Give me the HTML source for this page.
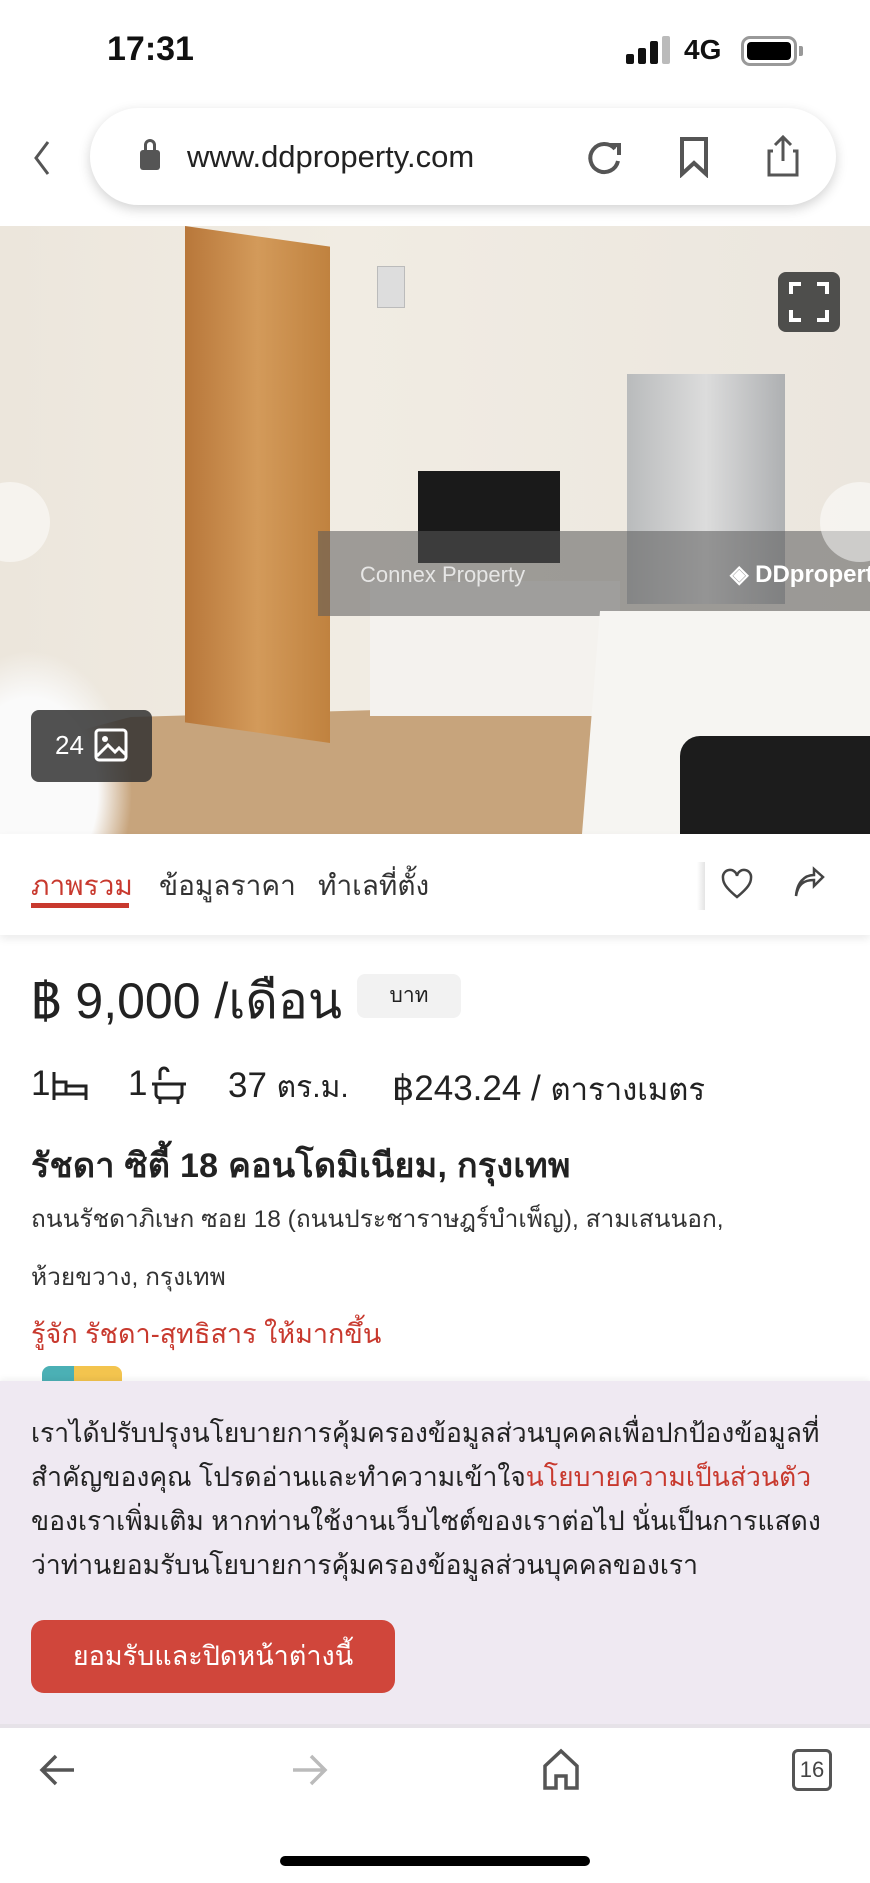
<!DOCTYPE html>
<html><head><meta charset="utf-8"><style>
*{margin:0;padding:0;box-sizing:border-box}
body{width:870px;height:1883px;background:#fff;font-family:"Liberation Sans","Noto Sans CJK SC",sans-serif;position:relative;overflow:hidden;color:#222}
.a{position:absolute}
.th{font-family:"Liberation Sans","Noto Sans CJK SC","WenQuanYi Zen Hei",sans-serif}
</style></head><body>
<!-- status bar -->
<div class="a" style="left:107px;top:30px;font-size:34px;font-weight:bold;color:#111">17:31</div>
<div class="a" style="left:626px;top:54px;width:8px;height:10px;background:#111;border-radius:2px"></div>
<div class="a" style="left:638px;top:48px;width:8px;height:16px;background:#111;border-radius:2px"></div>
<div class="a" style="left:650px;top:41px;width:8px;height:23px;background:#111;border-radius:2px"></div>
<div class="a" style="left:662px;top:36px;width:8px;height:28px;background:#bbb;border-radius:2px"></div>
<div class="a" style="left:684px;top:34px;font-size:28px;font-weight:bold;color:#111">4G</div>
<div class="a" style="left:741px;top:36px;width:56px;height:30px;border:3px solid #999;border-radius:9px;padding:3px"><div style="width:100%;height:100%;background:#000;border-radius:4px"></div></div>
<div class="a" style="left:799px;top:46px;width:4px;height:10px;background:#999;border-radius:0 2px 2px 0"></div>
<!-- url bar -->
<svg class="a" style="left:28px;top:138px" width="30" height="40"><path d="M20 4 L8 20 L20 36" stroke="#555" stroke-width="3" fill="none"/></svg>
<div class="a" style="left:90px;top:108px;width:746px;height:97px;background:#fff;border-radius:49px;box-shadow:0 4px 12px rgba(0,0,0,.18)"></div>
<div class="a" style="left:140px;top:150px;width:20px;height:20px;background:#555;border-radius:3px"></div>
<div class="a" style="left:144px;top:139px;width:12px;height:16px;border:3px solid #555;border-radius:6px 6px 0 0"></div>
<div class="a" style="left:187px;top:139px;font-size:31px;color:#222">www.ddproperty.com</div>
<svg class="a" style="left:585px;top:137px" width="42" height="42"><path d="M30 12 A14 14 0 1 0 33 24" stroke="#555" stroke-width="4" fill="none"/><path d="M24 8 L34 8 L34 18" stroke="#555" stroke-width="4" fill="none"/></svg>
<svg class="a" style="left:678px;top:136px" width="34" height="42"><path d="M4 3 H28 V38 L16 27 L4 38 Z" stroke="#555" stroke-width="4" fill="none"/></svg>
<svg class="a" style="left:765px;top:133px" width="36" height="46"><path d="M8 18 H4 V42 H32 V18 H28" stroke="#555" stroke-width="3" fill="none"/><path d="M18 4 V28 M10 12 L18 4 L26 12" stroke="#555" stroke-width="3" fill="none"/></svg>
<!-- photo -->
<div class="a" style="left:0;top:226px;width:870px;height:608px;overflow:hidden;background:linear-gradient(90deg,#ece6dc 0%,#f1ece3 40%,#ebe6de 100%)">
  <div class="a" style="left:0;top:470px;width:870px;height:140px;background:#c7a47c;clip-path:polygon(15% 15%,100% 0,100% 100%,0 100%,0 40%)"></div>
  <div class="a" style="left:185px;top:0;width:145px;height:517px;background:linear-gradient(90deg,#b8773a,#d39a5a,#c0823f);clip-path:polygon(0 0,100% 4%,100% 100%,0 96%)"></div>
  <div class="a" style="left:377px;top:40px;width:28px;height:42px;background:#ddd;border:1px solid #bbb"></div>
  <div class="a" style="left:627px;top:148px;width:158px;height:230px;background:linear-gradient(90deg,#b9bbbc,#dcdcdc,#aeb0b2)"></div>
  <div class="a" style="left:370px;top:355px;width:250px;height:135px;background:#f4f2ee"></div>
  <div class="a" style="left:418px;top:245px;width:142px;height:92px;background:#1a1a1a"></div>
  <div class="a" style="left:318px;top:305px;width:552px;height:85px;background:rgba(90,90,90,.55)"></div>
  <div class="a" style="left:360px;top:336px;font-size:22px;color:rgba(255,255,255,.75)">Connex Property</div>
  <div class="a" style="left:730px;top:334px;font-size:24px;color:#fff;font-weight:bold;white-space:nowrap">◈ DDpropert</div>
  <div class="a" style="left:570px;top:385px;width:300px;height:223px;background:#f6f5f2;clip-path:polygon(10% 0,100% 0,100% 100%,4% 100%)"></div>
  <div class="a" style="left:680px;top:510px;width:190px;height:98px;background:#1c1c1c;border-radius:20px 0 0 0"></div>
  <div class="a" style="left:0;top:400px;width:150px;height:208px;background:radial-gradient(ellipse at 20% 80%,#fafafa 40%,transparent 60%)"></div>
  <div class="a" style="left:-30px;top:256px;width:80px;height:80px;border-radius:50%;background:rgba(255,255,255,.5)"></div>
  <div class="a" style="left:820px;top:256px;width:80px;height:80px;border-radius:50%;background:rgba(255,255,255,.5)"></div>
  <div class="a" style="left:31px;top:484px;width:121px;height:72px;background:rgba(50,50,50,.85);border-radius:8px;color:#fff;font-size:26px;padding:20px 0 0 24px">24</div>
  <svg class="a" style="left:94px;top:502px" width="34" height="34"><rect x="2" y="2" width="30" height="30" rx="3" stroke="#fff" stroke-width="3" fill="none"/><circle cx="11" cy="11" r="3" fill="#fff"/><path d="M3 28 L14 17 L21 24 L25 20 L32 27" stroke="#fff" stroke-width="3" fill="none"/></svg>
  <div class="a" style="left:778px;top:46px;width:62px;height:60px;background:rgba(50,50,50,.85);border-radius:8px"></div>
  <svg class="a" style="left:788px;top:55px" width="42" height="42"><path d="M3 13V3H13M29 3H39V13M39 29V39H29M13 39H3V29" stroke="#fff" stroke-width="4" fill="none"/></svg>
</div>
<!-- tabs -->
<div class="a" style="left:0;top:834px;width:870px;height:101px;background:#fff;box-shadow:0 4px 8px rgba(0,0,0,.08)"></div>
<div class="a th" style="left:31px;top:864px;font-size:28px;color:#c8392e">ภาพรวม</div>
<div class="a" style="left:31px;top:903px;width:98px;height:5px;background:#c8392e"></div>
<div class="a th" style="left:159px;top:864px;font-size:28px;color:#333">ข้อมูลราคา</div>
<div class="a th" style="left:318px;top:864px;font-size:28px;color:#333">ทำเลที่ตั้ง</div>
<div class="a" style="left:697px;top:862px;width:8px;height:48px;background:linear-gradient(90deg,#fff,#e4e4e4)"></div>
<svg class="a" style="left:720px;top:868px" width="34" height="32"><path d="M17 29 C6 20 3 15 3 10 A7 7 0 0 1 17 8 A7 7 0 0 1 31 10 C31 15 28 20 17 29Z" stroke="#444" stroke-width="2.5" fill="none"/></svg>
<svg class="a" style="left:792px;top:866px" width="34" height="34"><path d="M4 30 C6 18 12 14 22 14 V20 L31 11 L22 3 V9 C12 9 5 17 4 30Z" stroke="#444" stroke-width="2.5" fill="none"/></svg>
<!-- price -->
<div class="a th" style="left:31px;top:962px;font-size:50px;color:#222">฿ 9,000 /เดือน</div>
<div class="a th" style="left:357px;top:974px;width:104px;height:44px;background:#f2f2f2;border-radius:8px;font-size:21px;text-align:center;line-height:44px">บาท</div>
<!-- features -->
<div class="a th" style="left:31px;top:1064px;font-size:35px;color:#222">1</div>
<svg class="a" style="left:52px;top:1070px" width="38" height="34"><path d="M2 2V30M2 12H14V24M14 16H34V30M2 24H34" stroke="#222" stroke-width="3" fill="none"/></svg>
<div class="a th" style="left:128px;top:1064px;font-size:35px;color:#222">1</div>
<svg class="a" style="left:150px;top:1066px" width="40" height="40"><path d="M10 14V6A4 4 0 0 1 18 6M2 18H36M6 18V28A4 4 0 0 0 10 32H28A4 4 0 0 0 32 28V18M10 32V38M28 32V38" stroke="#222" stroke-width="3" fill="none"/></svg>
<div class="a th" style="left:228px;top:1064px;font-size:35px;color:#222">37 <span style="font-size:30px">ตร.ม.</span></div>
<div class="a th" style="left:392px;top:1064px;font-size:35px;color:#222">฿243.24 / <span style="font-size:31px">ตารางเมตร</span></div>
<!-- title -->
<div class="a th" style="left:31px;top:1138px;font-size:34px;font-weight:bold;color:#222;letter-spacing:0.3px">รัชดา ซิตี้ 18 คอนโดมิเนียม, กรุงเทพ</div>
<div class="a th" style="left:31px;top:1199px;font-size:24.5px;color:#333">ถนนรัชดาภิเษก ซอย 18 (ถนนประชาราษฎร์บำเพ็ญ), สามเสนนอก,</div>
<div class="a th" style="left:31px;top:1257px;font-size:24.5px;color:#333">ห้วยขวาง, กรุงเทพ</div>
<div class="a th" style="left:31px;top:1312px;font-size:27px;color:#c8392e">รู้จัก รัชดา-สุทธิสาร ให้มากขึ้น</div>
<div class="a" style="left:42px;top:1366px;width:80px;height:16px;background:linear-gradient(90deg,#4bb0b5 40%,#f3c44e 40%);border-radius:8px 8px 0 0"></div>
<!-- consent -->
<div class="a" style="left:0;top:1381px;width:870px;height:344px;background:#efe9f2;box-shadow:0 -2px 6px rgba(0,0,0,.06)"></div>
<div class="a th" style="left:31px;top:1411px;width:840px;font-size:26.5px;line-height:44px;color:#222;white-space:nowrap">เราได้ปรับปรุงนโยบายการคุ้มครองข้อมูลส่วนบุคคลเพื่อปกป้องข้อมูลที่<br>สำคัญของคุณ โปรดอ่านและทำความเข้าใจ<span style="color:#c8392e">นโยบายความเป็นส่วนตัว</span><br>ของเราเพิ่มเติม หากท่านใช้งานเว็บไซต์ของเราต่อไป นั่นเป็นการแสดง<br>ว่าท่านยอมรับนโยบายการคุ้มครองข้อมูลส่วนบุคคลของเรา</div>
<div class="a th" style="left:31px;top:1620px;width:364px;height:73px;background:#d0463b;border-radius:13px;color:#fff;font-size:27px;text-align:center;line-height:73px">ยอมรับและปิดหน้าต่างนี้</div>
<div class="a" style="left:0;top:1724px;width:870px;height:4px;background:#e6e2e8"></div>
<!-- bottom nav -->
<svg class="a" style="left:38px;top:1752px" width="40" height="36"><path d="M36 18H4M18 4L4 18L18 32" stroke="#555" stroke-width="3.5" fill="none"/></svg>
<svg class="a" style="left:289px;top:1752px" width="40" height="36"><path d="M4 18H36M22 4L36 18L22 32" stroke="#bbb" stroke-width="3.5" fill="none"/></svg>
<svg class="a" style="left:542px;top:1748px" width="38" height="42"><path d="M3 40V18L19 3L35 18V40H24V28H14V40Z" stroke="#555" stroke-width="3.5" fill="none"/></svg>
<div class="a" style="left:792px;top:1749px;width:40px;height:42px;border:3.5px solid #555;border-radius:6px;font-size:22px;text-align:center;line-height:36px;color:#444">16</div>
<div class="a" style="left:280px;top:1856px;width:310px;height:10px;background:#000;border-radius:5px"></div>
</body></html>
